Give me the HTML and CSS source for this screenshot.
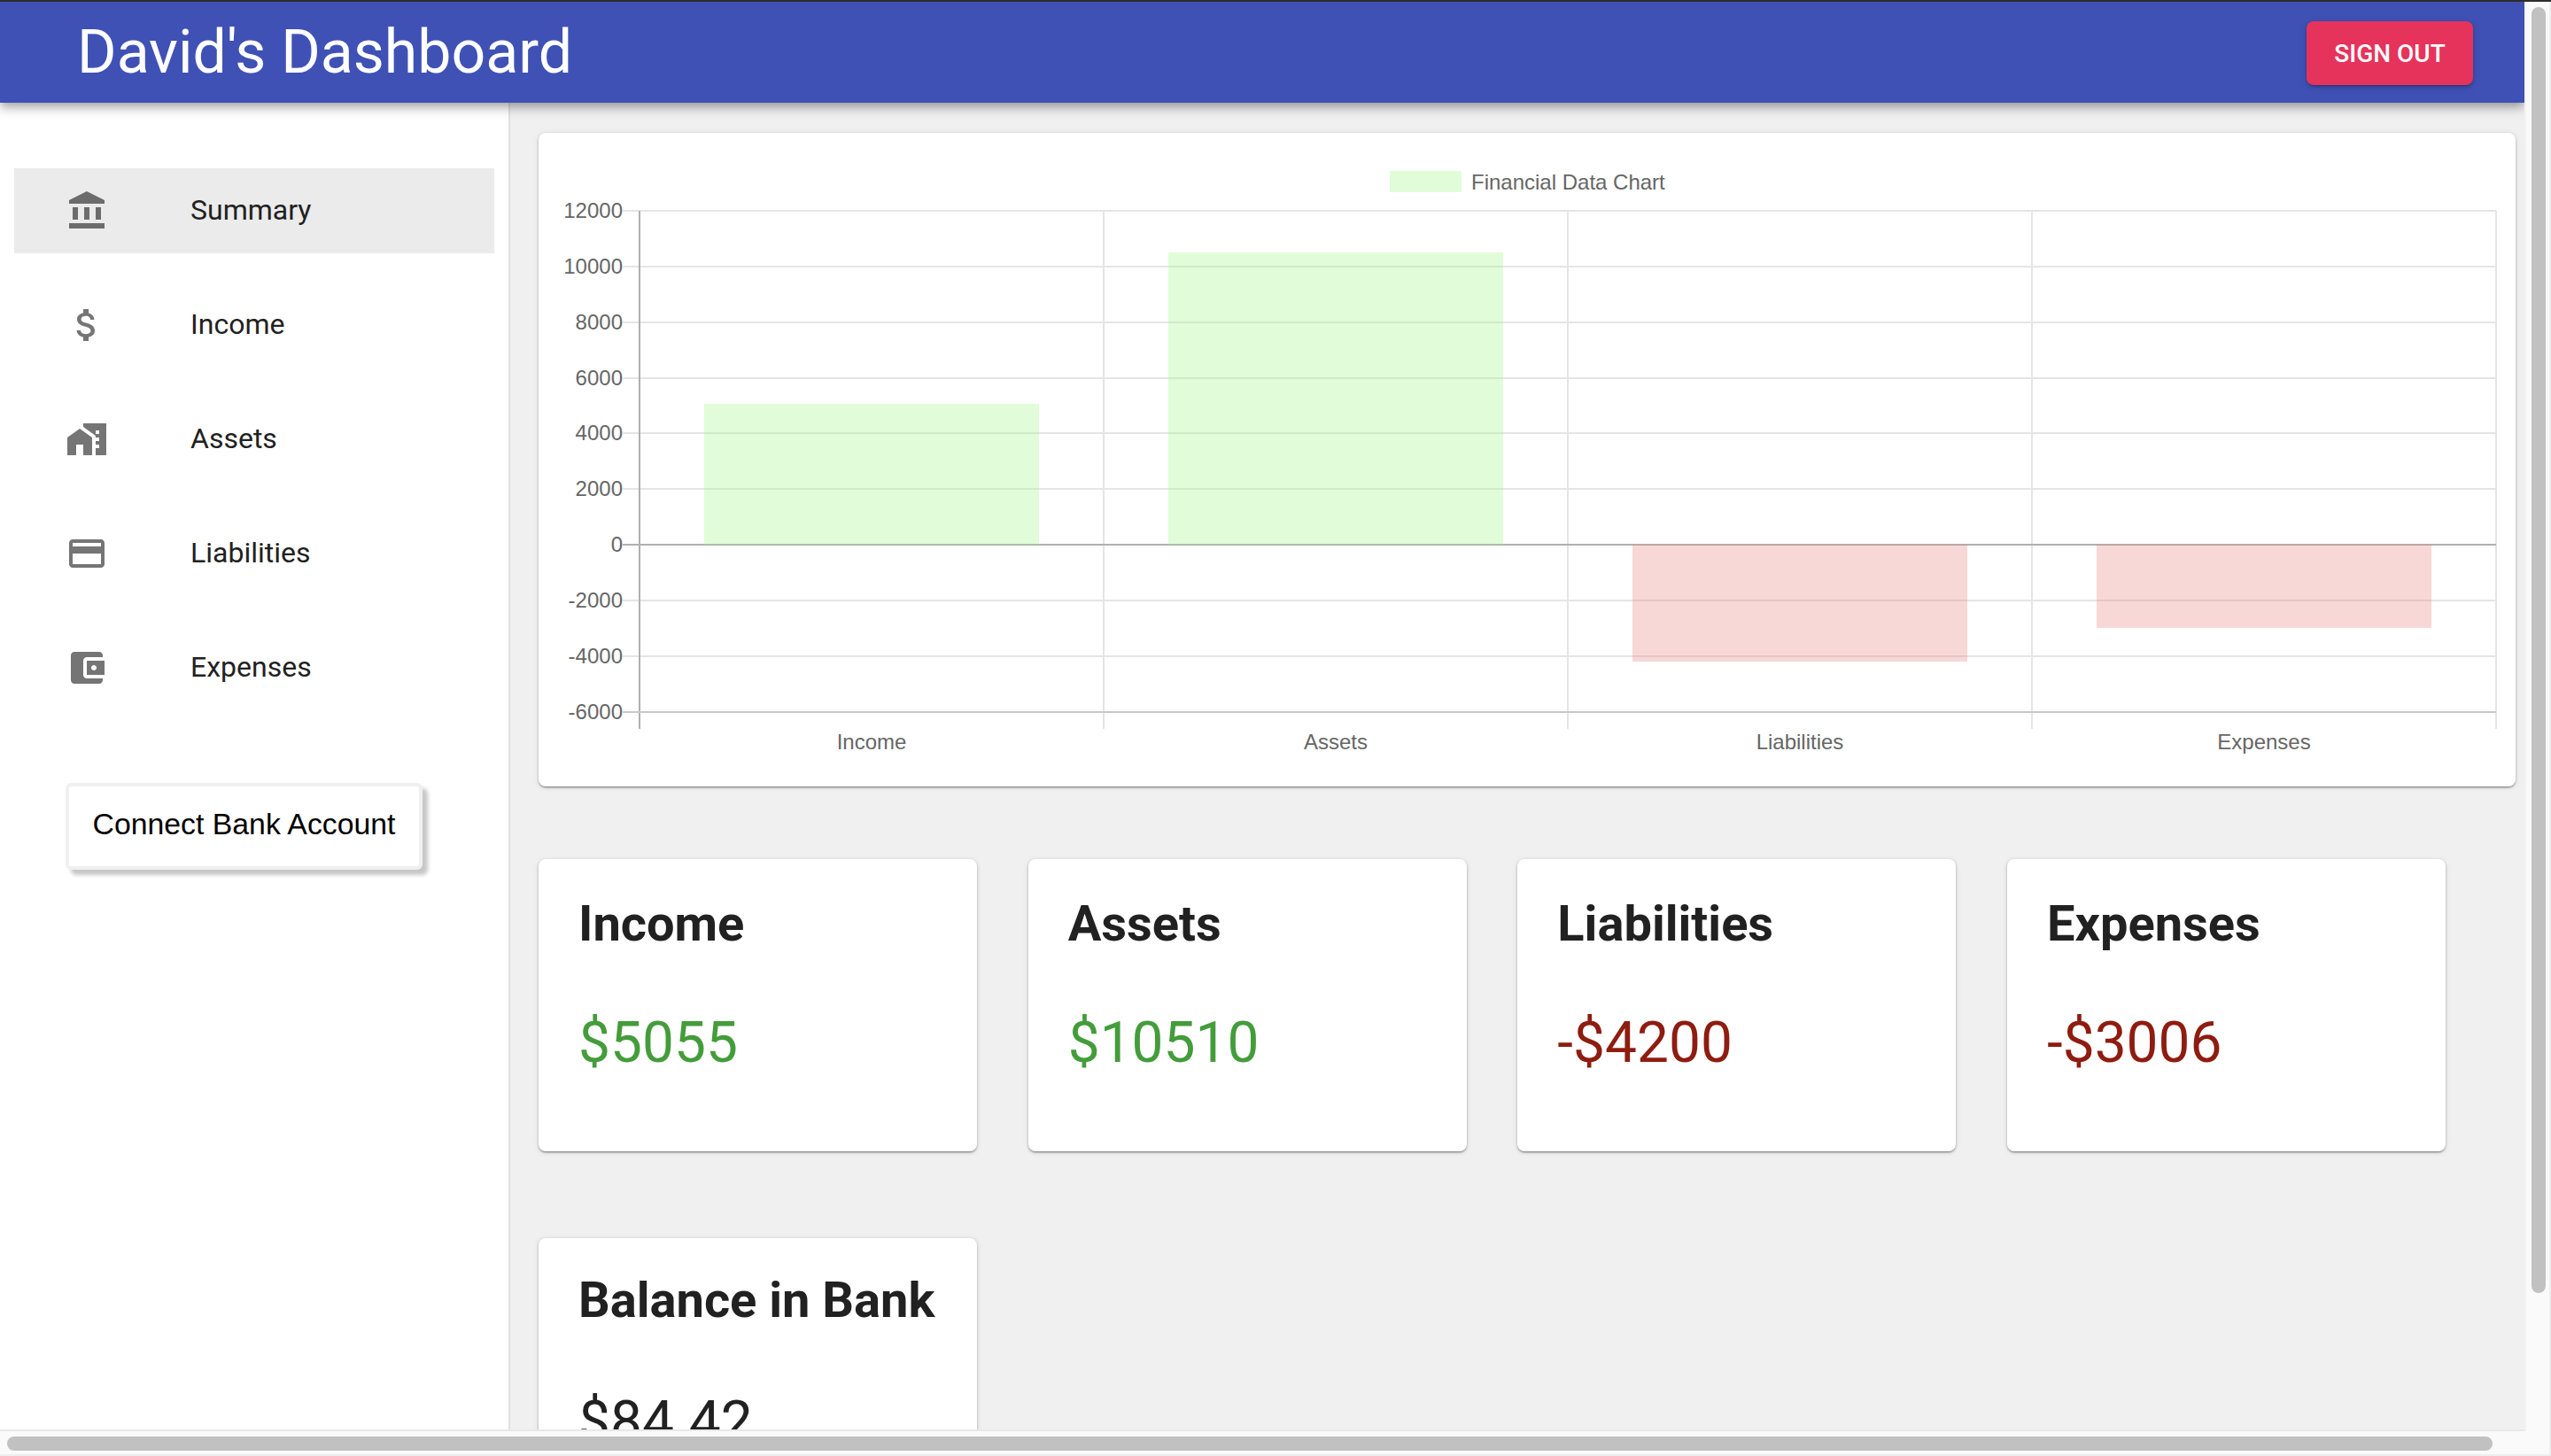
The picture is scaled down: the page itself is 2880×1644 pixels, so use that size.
FILE: index.html
```html
<!DOCTYPE html>
<html lang="en">
<head>
<meta charset="utf-8">
<title>David's Dashboard</title>
<link rel="stylesheet" href="styles.css">
</head>
<body>
<div class="window">
  <div class="viewport">
    <header class="appbar">
      <h1 class="brand">David's Dashboard</h1>
      <button class="signout">SIGN OUT</button>
    </header>
    <div class="body">
      <nav class="sidebar">
        <ul class="menu">
          <li class="item selected">
            <svg class="icon" viewBox="0 0 48 48"><path d="M4 16v-4L24 2l20 10v4zM8 20h6v14H8zM21 20h6v14h-6zM34 20h6v14h-6zM4 38h40v6H4z"/></svg>
            <span class="label">Summary</span>
          </li>
          <li class="item">
            <svg class="icon" viewBox="0 0 24 24"><path d="M11.8 10.9c-2.27-.59-3-1.2-3-2.15 0-1.09 1.01-1.85 2.7-1.85 1.78 0 2.44.85 2.5 2.1h2.21c-.07-1.72-1.12-3.3-3.21-3.81V3h-3v2.16c-1.94.42-3.5 1.68-3.5 3.61 0 2.31 1.91 3.46 4.7 4.13 2.5.6 3 1.48 3 2.41 0 .69-.49 1.79-2.7 1.79-2.06 0-2.87-.92-2.98-2.1h-2.2c.12 2.19 1.76 3.42 3.68 3.83V21h3v-2.15c1.95-.37 3.5-1.5 3.5-3.55 0-2.84-2.43-3.81-4.7-4.4z"/></svg>
            <span class="label">Income</span>
          </li>
          <li class="item">
            <svg class="icon" viewBox="0 0 24 24"><path d="M1 11v10h5v-6h4v6h5V11L8 6z"/><path d="M10 3v1.97l7 5V11h2v2h-2v2h2v2h-2v4h6V3H10zm9 6h-2V7h2v2z"/></svg>
            <span class="label">Assets</span>
          </li>
          <li class="item">
            <svg class="icon" viewBox="0 0 24 24"><path d="M20 4H4c-1.11 0-1.99.89-1.99 2L2 18c0 1.11.89 2 2 2h16c1.11 0 2-.89 2-2V6c0-1.11-.89-2-2-2zm0 14H4v-6h16v6zm0-10H4V6h16v2z"/></svg>
            <span class="label">Liabilities</span>
          </li>
          <li class="item">
            <svg class="icon" viewBox="0 0 24 24"><path d="M21 18v1c0 1.1-.9 2-2 2H5c-1.11 0-2-.9-2-2V5c0-1.1.89-2 2-2h14c1.1 0 2 .9 2 2v1h-9c-1.11 0-2 .9-2 2v8c0 1.1.89 2 2 2h9zm-9-2h10V8H12v8zm4-2.5c-.83 0-1.5-.67-1.5-1.5s.67-1.5 1.5-1.5 1.5.67 1.5 1.5-.67 1.5-1.5 1.5z"/></svg>
            <span class="label">Expenses</span>
          </li>
        </ul>
        <button class="connect">Connect Bank Account</button>
      </nav>
      <main class="main">
        <section class="chart-card">
          <svg class="chart" viewBox="608 150 2232 738">
            <rect class="bar-green" x="1569" y="193" width="81" height="24"/>
            <text class="tick" x="1661" y="214">Financial Data Chart</text>

            <g class="grid">
              <path d="M703 238H2818M703 301H2818M703 364H2818M703 427H2818M703 489H2818M703 552H2818M703 678H2818M703 741H2818"/>
              <path d="M1246 238V823M1770 238V823M2294 238V823M2818 238V823"/>
            </g>
            <g class="axis">
              <path d="M722 238V823"/>
              <path d="M703 615H2818"/>
              <path class="axis-light" d="M703 804H2818"/>
            </g>
            <rect class="bar-green" x="795" y="456" width="378" height="159"/>
            <rect class="bar-green" x="1319" y="285" width="378" height="330"/>
            <rect class="bar-red" x="1843" y="615" width="378" height="132"/>
            <rect class="bar-red" x="2367" y="615" width="378" height="94"/>
            <g class="tick tick-y">
              <text x="703" y="246">12000</text>
              <text x="703" y="309">10000</text>
              <text x="703" y="372">8000</text>
              <text x="703" y="435">6000</text>
              <text x="703" y="497">4000</text>
              <text x="703" y="560">2000</text>
              <text x="703" y="623">0</text>
              <text x="703" y="686">-2000</text>
              <text x="703" y="749">-4000</text>
              <text x="703" y="812">-6000</text>
            </g>
            <g class="tick tick-x">
              <text x="984" y="846">Income</text>
              <text x="1508" y="846">Assets</text>
              <text x="2032" y="846">Liabilities</text>
              <text x="2556" y="846">Expenses</text>
            </g>
          </svg>
        </section>
        <section class="cards">
          <article class="card">
            <h2 class="card-title">Income</h2>
            <p class="card-value positive">$5055</p>
          </article>
          <article class="card">
            <h2 class="card-title">Assets</h2>
            <p class="card-value positive">$10510</p>
          </article>
          <article class="card">
            <h2 class="card-title">Liabilities</h2>
            <p class="card-value negative">-$4200</p>
          </article>
          <article class="card">
            <h2 class="card-title">Expenses</h2>
            <p class="card-value negative">-$3006</p>
          </article>
          <article class="card card-balance">
            <h2 class="card-title">Balance in Bank</h2>
            <p class="card-value">$84.42</p>
          </article>
        </section>
      </main>
    </div>
  </div>
  <div class="vtrack"><div class="vthumb"></div></div>
  <div class="htrack"><div class="hthumb"></div></div>
  <div class="corner"></div>
</div>
</body>
</html>
```
FILE: styles.css
```css
* { box-sizing: border-box; }
html, body { margin: 0; padding: 0; height: 100%; overflow: hidden; }
body {
  font-family: Roboto, "Liberation Sans", sans-serif;
  background: #fafafa;
  color: #212121;
  border-top: 2px solid #2d2d2d;
}
.window {
  display: grid;
  grid-template-columns: 2850px 30px;
  grid-template-rows: 1614px 28px;
  height: 1642px;
}
.viewport {
  display: flex;
  flex-direction: column;
  overflow: hidden;
  border-bottom: 2px solid #e8e8e8;
}
.appbar {
  flex: none;
  position: relative;
  z-index: 2;
  height: 114px;
  display: flex;
  align-items: center;
  justify-content: space-between;
  padding: 0 58px 0 87px;
  background: #3f51b5;
  box-shadow: 0 4px 8px -2px rgba(0,0,0,.2), 0 8px 10px 0 rgba(0,0,0,.14), 0 2px 20px 0 rgba(0,0,0,.12);
}
.brand {
  margin: 0;
  font-size: 68px;
  font-weight: 400;
  line-height: 1;
  color: #fff;
}
.signout {
  width: 188px;
  height: 72px;
  margin-top: 2px;
  border: 0;
  border-radius: 8px;
  background: #e6335c;
  color: #fff;
  font: 500 28px Roboto, sans-serif;
  box-shadow: 0 3px 2px -2px rgba(0,0,0,.2), 0 2px 4px 0 rgba(0,0,0,.14), 0 2px 10px 0 rgba(0,0,0,.12);
}
.body { flex: 1; display: flex; min-height: 0; }
.sidebar {
  flex: none;
  width: 576px;
  padding: 74px 16px 0;
  background: #fff;
  border-right: 2px solid #e0e0e0;
}
.menu {
  list-style: none;
  margin: 0;
  padding: 0;
  display: flex;
  flex-direction: column;
  gap: 33px;
}
.item {
  width: 542px;
  height: 96px;
  display: flex;
  align-items: center;
  padding-left: 58px;
}
.item.selected { background: #ebebeb; }
.icon { flex: none; width: 48px; height: 48px; fill: rgba(0,0,0,.54); }
.label { margin: 0 0 3px 93px; font-size: 32px; line-height: 1; color: #212121; }
.connect {
  display: block;
  width: 403px;
  height: 98px;
  margin: 82px 0 0 58px;
  padding: 0 0 5px;
  background: #fff;
  border: 4px solid #f0f0f0;
  border-radius: 6px;
  box-shadow: 6px 6px 4px rgba(0,0,0,.22);
  font: 33.8px "Liberation Sans", Arial, sans-serif;
  color: #000;
}
.main {
  flex: 1;
  min-width: 0;
  background: #f0f0f0;
  padding: 34px 10px 0 32px;
}
.chart-card {
  width: 2232px;
  height: 738px;
  background: #fff;
  border-radius: 8px;
  box-shadow: 0 2px 2px -1px rgba(0,0,0,.35), 0 1px 3px 0 rgba(0,0,0,.2), 0 1px 6px 0 rgba(0,0,0,.1);
}
.chart { display: block; width: 100%; height: 100%; }
.grid path { fill: none; stroke: #e5e5e5; stroke-width: 2; }
.axis path { fill: none; stroke: #b0b0b0; stroke-width: 2; }
.axis .axis-light { stroke: #c8c8c8; }
.bar-green { fill: rgba(155,245,128,.3); }
.bar-red { fill: rgba(232,122,122,.3); }
.tick { font: 24px "Liberation Sans", Arial, sans-serif; fill: #666; }
.tick-y text { text-anchor: end; }
.tick-x text { text-anchor: middle; }
.cards {
  margin-top: 82px;
  display: grid;
  grid-template-columns: repeat(4, 495px);
  column-gap: 57.67px;
  row-gap: 98px;
}
.card {
  height: 330px;
  padding: 41px 45px;
  background: #fff;
  border-radius: 8px;
  box-shadow: 0 2px 2px -1px rgba(0,0,0,.35), 0 1px 3px 0 rgba(0,0,0,.2), 0 1px 6px 0 rgba(0,0,0,.1);
}
.card-title {
  margin: 0;
  font-size: 56px;
  font-weight: 700;
  line-height: 1.17;
  color: #212121;
  white-space: nowrap;
}
.card-balance .card-title { margin-top: -3px; padding-bottom: 3px; }
.card-value {
  margin: 69px 0 0;
  font-size: 64px;
  font-weight: 400;
  line-height: 1;
  color: #212121;
}
.positive { color: #449c3b; }
.negative { color: #8e1c10; }
.vtrack {
  background: #fafafa;
  padding: 6px 0 0 6px;
  border-right: 2px solid #ededed;
  border-left: 2px solid #f2f2f2;
}
.vthumb { width: 16px; height: 1452px; border-radius: 8px; background: #c1c1c1; }
.htrack {
  background: #fafafa;
  padding: 6px 0 0 8px;
  border-bottom: 2px solid #ededed;
}
.hthumb { width: 2806px; height: 16px; border-radius: 8px; background: #c1c1c1; }
.corner { background: #fafafa; border-right: 2px solid #ededed; border-bottom: 2px solid #ededed; }
```
